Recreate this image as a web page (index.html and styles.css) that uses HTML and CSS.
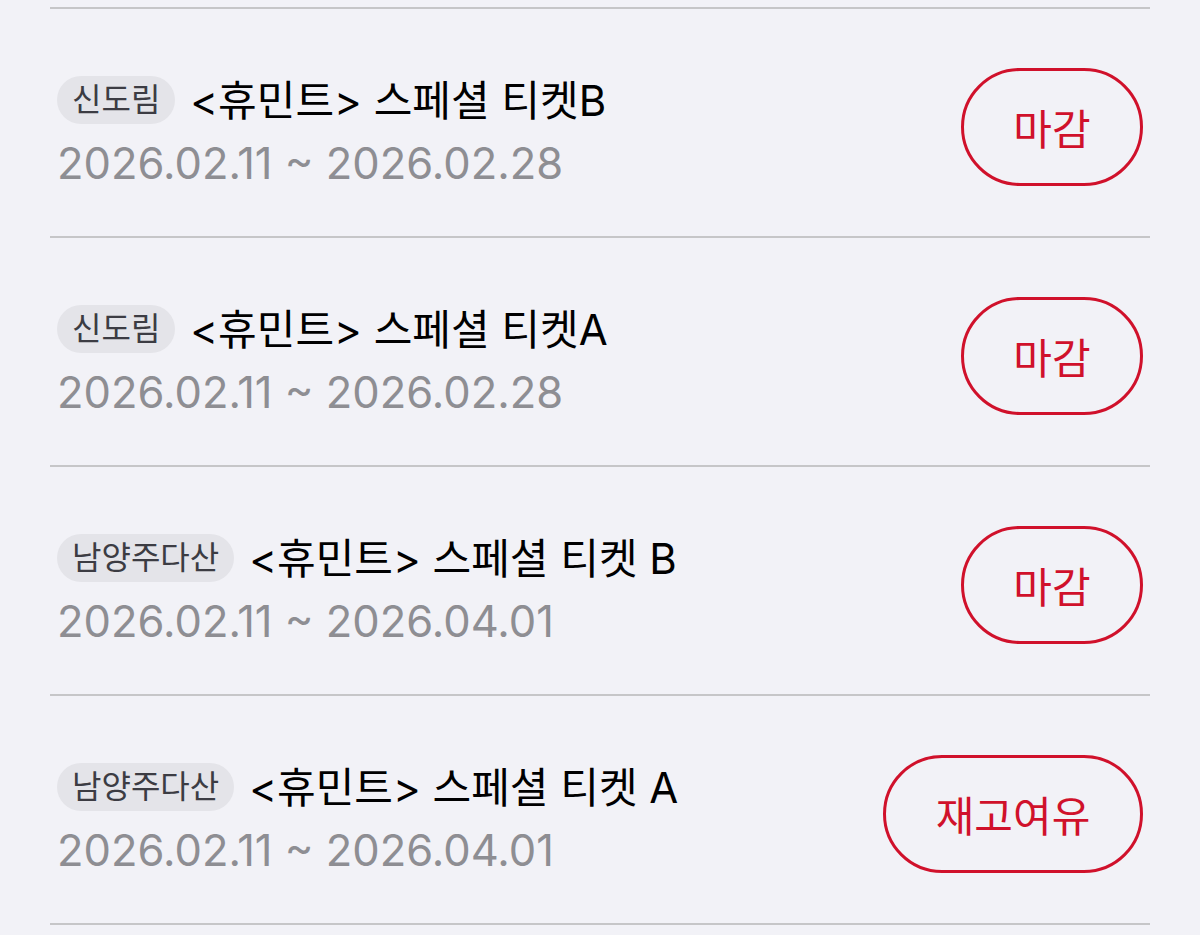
FILE: index.html
```html
<!DOCTYPE html>
<html lang="ko">

<head>
    <meta charset="utf-8">
    <title>티켓 목록</title>
    <link rel="stylesheet" href="styles.css">
</head>

<body>

    <ul class="ticket-list">
        <li class="ticket">
            <div class="ticket-info">
                <div class="ticket-head">
                    <span class="branch">신도림</span>
                    <span class="ticket-name">&lt;휴민트&gt; 스페셜 티켓B</span>
                </div>
                <div class="ticket-date">2026.02.11 ~ 2026.02.28</div>
            </div>
            <button class="status-btn">마감</button>
        </li>
        <li class="ticket">
            <div class="ticket-info">
                <div class="ticket-head">
                    <span class="branch">신도림</span>
                    <span class="ticket-name">&lt;휴민트&gt; 스페셜 티켓A</span>
                </div>
                <div class="ticket-date">2026.02.11 ~ 2026.02.28</div>
            </div>
            <button class="status-btn">마감</button>
        </li>
        <li class="ticket">
            <div class="ticket-info">
                <div class="ticket-head">
                    <span class="branch">남양주다산</span>
                    <span class="ticket-name">&lt;휴민트&gt; 스페셜 티켓 B</span>
                </div>
                <div class="ticket-date">2026.02.11 ~ 2026.04.01</div>
            </div>
            <button class="status-btn">마감</button>
        </li>
        <li class="ticket">
            <div class="ticket-info">
                <div class="ticket-head">
                    <span class="branch">남양주다산</span>
                    <span class="ticket-name">&lt;휴민트&gt; 스페셜 티켓 A</span>
                </div>
                <div class="ticket-date">2026.02.11 ~ 2026.04.01</div>
            </div>
            <button class="status-btn wide">재고여유</button>
        </li>
    </ul>

</body>

</html>
```

FILE: styles.css
```css
body {
    margin: 0;
    background-color: #f2f2f7;
    font-family: Inter, "Noto Sans CJK KR", sans-serif;
}

.ticket-list {
    list-style: none;
    margin: 7px 0 0 50px;
    padding: 0;
    width: 1100px;
    border-top: 2px solid #c6c6c8;
}

.ticket {
    display: flex;
    align-items: center;
    justify-content: space-between;
    height: 227px;
    padding: 0 7px;
    border-bottom: 2px solid #c6c6c8;
}

.ticket-info {
    display: flex;
    flex-direction: column;
    margin-top: 10px;
}

.ticket-head {
    display: flex;
    align-items: center;
}

.branch {
    height: 48px;
    line-height: 48px;
    padding: 0 15px;
    border-radius: 24px;
    background-color: #e4e4e9;
    color: #3c3c43;
    font-size: 32px;
}

.ticket-name {
    margin-left: 15px;
    margin-bottom: 5px;
    font-size: 42px;
    color: #000;
}

.ticket-date {
    margin-top: 4px;
    font-size: 43.5px;
    line-height: 52px;
    color: #8e8e93;
}

.status-btn {
    width: 182px;
    height: 118px;
    margin-top: 8px;
    background: none;
    border: 3px solid #d0112b;
    border-radius: 59px;
    color: #d0112b;
    font-family: inherit;
    font-size: 42px;
    cursor: pointer;
}

.status-btn.wide {
    width: 260px;
}
```
